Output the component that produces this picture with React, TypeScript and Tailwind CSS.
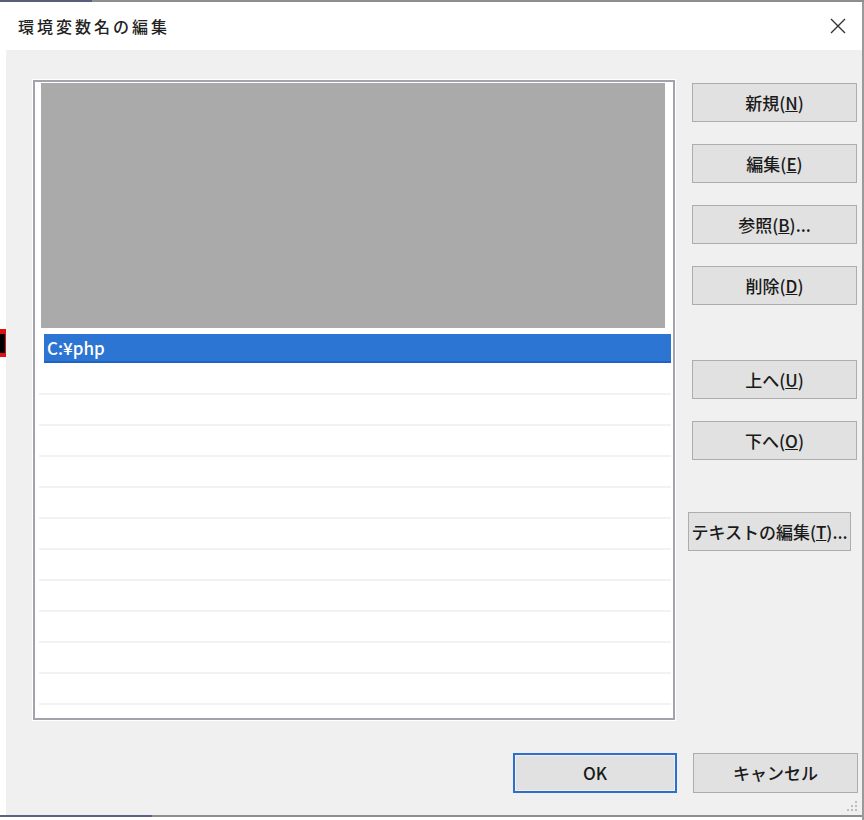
import React from "react";

const FONT = { fontFamily: '"Noto Sans CJK JP", "Noto Sans", "Liberation Sans", sans-serif' };

function Btn({ children, className = "" }: { children: React.ReactNode; className?: string }) {
  return (
    <div
      className={`h-[39px] border border-[#adadad] bg-[#e1e1e1] text-[17px] font-medium text-[#1a1a1a] flex items-center justify-center ${className}`}
    >
      {children}
    </div>
  );
}

export default function App() {
  const rows = Array.from({ length: 11 });
  return (
    <div className="w-[864px] h-[820px] bg-white flex flex-col overflow-hidden relative" style={FONT}>
      {/* top strip */}
      <div className="h-[2px] flex">
        <div className="w-[92px] bg-[#56607e]" />
        <div className="flex-1 bg-[#8e8e8e]" />
      </div>
      <div className="flex-1 flex">
        <div className="flex-1 flex flex-col">
          {/* title bar */}
          <div className="h-[48px] flex items-center justify-between pl-[18px] pr-[15px] bg-white">
            <span className="text-[16px] font-medium tracking-[3px] text-[#222]">環境変数名の編集</span>
            <svg width="16" height="16" viewBox="0 0 16 16" className="mr-[1px]">
              <path d="M1 1 L15 15 M15 1 L1 15" stroke="#333" strokeWidth="1.4" />
            </svg>
          </div>
          {/* body */}
          <div className="flex-1 flex">
            <div className="w-[6px] bg-white flex flex-col">
              <div className="mt-[279px] h-[28px] bg-[#e01010] flex items-center">
                <div className="h-[19px] w-[5px] bg-black" />
              </div>
            </div>
            <div className="flex-1 bg-[#f0f0f0] flex flex-col relative">
              <div className="flex">
                {/* list */}
                <div className="ml-[27px] mt-[30px] w-[642px] h-[640px] border-2 border-[#a3a3ab] bg-white shadow-[0_0_0_1px_#ffffff] flex flex-col">
                  <div className="ml-[6px] mt-[1px] w-[624px] h-[245px] bg-[#aaaaaa]" />
                  <div className="ml-[9px] mt-[6px] w-[627px] h-[29px] bg-[#2c75d2] border-b-2 border-[#1d62c4] flex items-center pl-[3px] text-[17px] font-medium text-white">
                    C:¥php
                  </div>
                  <div className="mt-[1px] ml-[4px] w-[632px] flex flex-col">
                    {rows.map((_, i) => (
                      <div key={i} className="h-[31px] border-b-2 border-[#f2f2f2]" />
                    ))}
                  </div>
                </div>
                {/* buttons */}
                <div className="ml-[17px] mt-[33px] w-[165px] flex flex-col">
                  <Btn>新規(<u>N</u>)</Btn>
                  <Btn className="mt-[22px]">編集(<u>E</u>)</Btn>
                  <Btn className="mt-[22px]">参照(<u>B</u>)...</Btn>
                  <Btn className="mt-[22px]">削除(<u>D</u>)</Btn>
                  <Btn className="mt-[55px]">上へ(<u>U</u>)</Btn>
                  <Btn className="mt-[22px]">下へ(<u>O</u>)</Btn>
                  <Btn className="mt-[52px] -ml-[4px] w-[163px]">テキストの編集(<u>T</u>)...</Btn>
                </div>
              </div>
              {/* bottom buttons */}
              <div className="mt-[33px] flex justify-end pr-[4px] gap-[16px]">
                <div className="w-[164px] h-[40px] border-2 border-[#2a70d4] shadow-[inset_0_0_0_1px_#f6efe2] bg-[#e1e1e1] text-[17px] font-medium text-[#1a1a1a] flex items-center justify-center">
                  OK
                </div>
                <Btn className="w-[165px] h-[40px]">キャンセル</Btn>
              </div>
              {/* resize grip */}
              <svg width="12" height="12" viewBox="0 0 12 12" className="absolute right-[4px] bottom-[3px]">
                <rect x="9" y="1" width="2" height="2" fill="#bdbdbd" />
                <rect x="5" y="5" width="2" height="2" fill="#bdbdbd" />
                <rect x="9" y="5" width="2" height="2" fill="#bdbdbd" />
                <rect x="1" y="9" width="2" height="2" fill="#bdbdbd" />
                <rect x="5" y="9" width="2" height="2" fill="#bdbdbd" />
                <rect x="9" y="9" width="2" height="2" fill="#bdbdbd" />
              </svg>
            </div>
          </div>
          {/* bottom edge */}
          <div className="h-[2px] flex">
            <div className="w-[152px] bg-[#5a6482]" />
            <div className="flex-1 bg-[#8e8e8e]" />
          </div>
          <div className="h-[3px] bg-white" />
        </div>
        <div className="w-[2px] bg-[#9a9a9a]" />
      </div>
    </div>
  );
}
